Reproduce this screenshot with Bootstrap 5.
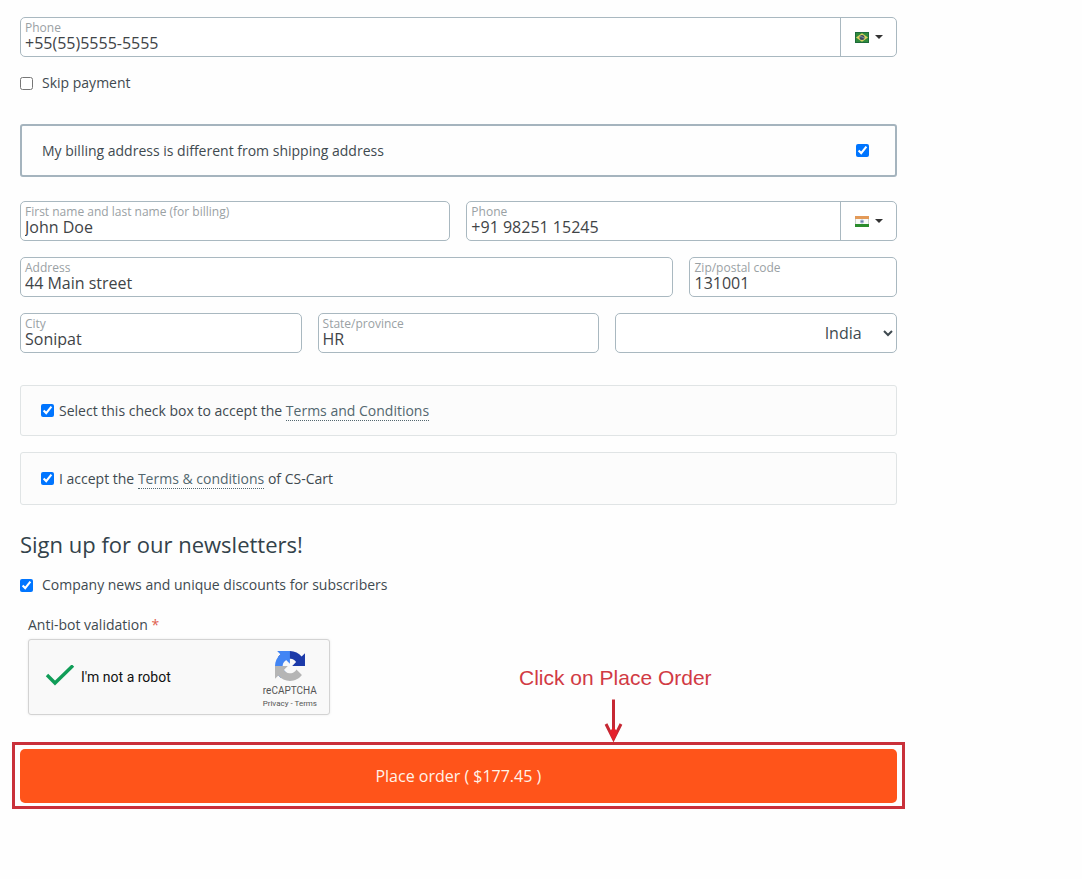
<!DOCTYPE html>
<html lang="en">
<head>
<meta charset="utf-8">
<meta name="viewport" content="width=device-width, initial-scale=1">
<title>Checkout</title>
<link href="https://cdn.jsdelivr.net/npm/bootstrap@5.3.0/dist/css/bootstrap.min.css" rel="stylesheet">
<style>
  body { font-family: "Open Sans", "Noto Sans", sans-serif; font-size: 14px; line-height: 20px; color: #3f4a50; background: #fefefe; }
  .checkout-pane { padding: 17px 5px 40px 20px; }
  input[type="checkbox"] { width: 13px; height: 13px; margin: 0; flex: none; }
  .check-line { gap: 9px; }

  /* Outlined text field with its caption above the value */
  .field-box { display: flex; height: 40px; border: 1px solid #a9b8c0; border-radius: 5px; background: #fff; }
  .field-main { display: flex; flex-direction: column; flex: 1 1 auto; min-width: 0; padding: 4px 4px 0; }
  .field-main label { font-size: 12px; line-height: 12px; color: #9aa1a4; }
  .field-main input { width: 100%; height: 18px; padding: 0; border: 0; outline: 0; background: none; color: #3f4447; font-size: 16px; line-height: 18px; }
  .flag-btn { flex: none; width: 56px; padding: 0 0 0 1px; border: 0; border-left: 1px solid #a9b8c0; background: none; color: #333; gap: 6px; }
  .caret-down { border: 4px solid transparent; border-top-color: #333; border-bottom: 0; }
  .country-select { width: 100%; height: 40px; padding: 0 18px 0 4px; border: 1px solid #a9b8c0; border-radius: 5px; background: #fff; color: #3f4a50; font-size: 16px; text-align: right; text-align-last: right; }

  .skip-row { margin-top: 16px; }
  .billing-toggle { margin: 31px 0 24px; padding: 0 26px 0 20px; height: 53px; border: 2px solid #a5b4be; border-radius: 3px; }
  .terms-list { margin-top: 32px; }
  .terms-box { min-height: 51px; padding: 0 20px; gap: 5px; border: 1px solid #e0e4e5; border-radius: 3px; background: #fcfcfc; }
  .terms-tall { min-height: 53px; }
  .terms-box a { color: #53676f; text-decoration: none; border-bottom: 1px dotted #53676f; }
  .news-title { margin: 24px 0 0; font-size: 22px; line-height: 30px; font-weight: 400; color: #33424a; }
  .news-row { margin-top: 16px; }

  .captcha-col { width: 310px; padding: 20px 0 27px 8px; }
  .captcha-col .required-star { color: #e0604f; }
  .captcha-box { width: 302px; height: 76px; margin-top: 4px; padding: 0 12px 0 16px; border: 1px solid #d3d3d3; border-radius: 3px; background: #f9f9f9; box-shadow: 0 0 3px rgba(0,0,0,.08); font-family: Roboto, sans-serif; color: #111; }
  .captcha-text { margin-left: 6px; }
  .captcha-brand { padding-top: 8px; font-size: 10px; line-height: 12px; color: #555; }
  .captcha-brand .legal { font-size: 8px; line-height: 14px; }
  .captcha-brand a { color: #555; text-decoration: none; }
  .callout { margin-left: 189px; font-family: "Liberation Sans", Arial, sans-serif; font-size: 21px; line-height: 24px; color: #d13a44; }
  .order-frame { margin: 0 -8px; padding: 4px 5px 3px; border: 3px solid #c9303a; }
  .order-btn { height: 54px; border: 0; border-radius: 5px; background: #ff541a; color: #fff3e8; font-size: 16px; font-weight: 500; }
</style>
</head>
<body>
<main class="row g-0">
  <form class="col-10 checkout-pane">
    <div class="field-box">
      <div class="field-main"><label for="phone">Phone</label><input id="phone" type="tel" value="+55(55)5555-5555"></div>
      <button type="button" class="flag-btn d-flex align-items-center justify-content-center" aria-label="Country code: Brazil">
        <svg width="14" height="11" viewBox="0 0 14 11" aria-hidden="true"><rect width="14" height="11" fill="#2f8a3c"/><rect x=".5" y=".5" width="13" height="10" fill="none" stroke="#1d6a3b"/><path d="M7 1.200 13 5.500 7 9.800 1 5.500z" fill="#d9d262"/><circle cx="7" cy="5.500" r="2.500" fill="#3c4a60"/><path d="M4.800 4.700Q7 4.200 9.200 6.200" stroke="#b9c4c6" stroke-width=".6" fill="none"/></svg>
        <span class="caret-down"></span>
      </button>
    </div>

    <div class="skip-row check-line d-flex align-items-center">
      <input type="checkbox" id="skip"><label for="skip">Skip payment</label>
    </div>

    <div class="billing-toggle d-flex align-items-center justify-content-between">
      <label for="billing">My billing address is different from shipping address</label>
      <input type="checkbox" id="billing" checked>
    </div>

    <div class="row g-3">
      <div class="col-6"><div class="field-box"><div class="field-main"><label for="fullname">First name and last name (for billing)</label><input id="fullname" type="text" value="John Doe"></div></div></div>
      <div class="col-6"><div class="field-box">
        <div class="field-main"><label for="bphone">Phone</label><input id="bphone" type="tel" value="+91 98251 15245"></div>
        <button type="button" class="flag-btn d-flex align-items-center justify-content-center" aria-label="Country code: India">
          <svg width="14" height="11" viewBox="0 0 14 11" aria-hidden="true"><rect width="14" height="11" fill="#c9d0cb"/><rect x="1" y="3" width="12" height="5" fill="#f8faf8"/><rect width="14" height="3" fill="#e39a58"/><rect y="8" width="14" height="3" fill="#2a8c2c"/><circle cx="7" cy="5.500" r="2" fill="#9fb0cc"/><circle cx="7" cy="5.500" r=".8" fill="#5a6d9c"/></svg>
          <span class="caret-down"></span>
        </button>
      </div></div>
      <div class="col-9"><div class="field-box"><div class="field-main"><label for="address">Address</label><input id="address" type="text" value="44 Main street"></div></div></div>
      <div class="col-3"><div class="field-box"><div class="field-main"><label for="zip">Zip/postal code</label><input id="zip" type="text" value="131001"></div></div></div>
      <div class="col-4"><div class="field-box"><div class="field-main"><label for="city">City</label><input id="city" type="text" value="Sonipat"></div></div></div>
      <div class="col-4"><div class="field-box"><div class="field-main"><label for="state">State/province</label><input id="state" type="text" value="HR"></div></div></div>
      <div class="col-4"><select class="country-select" aria-label="Country"><option selected>India</option></select></div>
    </div>

    <div class="terms-list d-flex flex-column gap-3">
      <div class="terms-box d-flex align-items-center">
        <input type="checkbox" id="terms1" checked>
        <label for="terms1">Select this check box to accept the <a href="#">Terms and Conditions</a></label>
      </div>
      <div class="terms-box terms-tall d-flex align-items-center">
        <input type="checkbox" id="terms2" checked>
        <label for="terms2">I accept the <a href="#">Terms &amp; conditions</a> of CS-Cart</label>
      </div>
    </div>

    <h2 class="news-title">Sign up for our newsletters!</h2>
    <div class="news-row check-line d-flex align-items-center">
      <input type="checkbox" id="news" checked><label for="news">Company news and unique discounts for subscribers</label>
    </div>

    <div class="d-flex align-items-end">
      <div class="captcha-col flex-shrink-0">
        <div>Anti-bot validation <span class="required-star">*</span></div>
        <div class="captcha-box d-flex align-items-center">
          <svg width="30" height="24" viewBox="0 0 30 24" fill="none" stroke="#109d58" stroke-width="3.4" aria-hidden="true"><path d="M2 10 10 18 28 0.500"/></svg>
          <span class="captcha-text me-auto">I'm not a robot</span>
          <div class="captcha-brand text-center">
            <svg class="d-block mx-auto mb-1" width="30" height="30" viewBox="0 0 64 64" aria-hidden="true">
              <path fill="#1c3aa9" d="M64 31.955l-.033-1.37V4.687l-7.16 7.16C50.948 4.674 42.033.093 32.05.093c-10.4 0-19.622 4.96-25.458 12.64l11.736 11.86a15.55 15.55 0 0 1 4.754-5.334c2.05-1.6 4.952-2.906 8.968-2.906.485 0 .86.057 1.135.163 4.976.393 9.288 3.14 11.828 7.124l-8.307 8.307L64 31.953"/>
              <path fill="#4285f4" d="M31.862.094l-1.37.033H4.594l7.16 7.16C4.58 13.147 0 22.06 0 32.046c0 10.4 4.96 19.622 12.64 25.458L24.5 45.768a15.55 15.55 0 0 1-5.334-4.754c-1.6-2.05-2.906-4.952-2.906-8.968 0-.485.057-.86.163-1.135.393-4.976 3.14-9.288 7.124-11.828l8.307 8.307L31.86.095"/>
              <path fill="#b5b5b5" d="M.001 32.045l.033 1.37v25.898l7.16-7.16c5.86 7.173 14.774 11.754 24.76 11.754 10.4 0 19.622-4.96 25.458-12.64l-11.736-11.86a15.55 15.55 0 0 1-4.754 5.334c-2.05 1.6-4.952 2.906-8.968 2.906-.485 0-.86-.057-1.135-.163-4.976-.393-9.288-3.14-11.828-7.124l8.307-8.307c-10.522.04-22.4.066-27.295-.005"/>
            </svg>
            <div>reCAPTCHA</div>
            <div class="legal"><a href="#">Privacy</a> - <a href="#">Terms</a></div>
          </div>
        </div>
      </div>
      <div class="callout text-nowrap text-center">
        Click on Place Order
        <svg class="d-block mx-auto" width="22" height="52" viewBox="0 0 22 52" fill="none" aria-hidden="true"><path d="M9.500 9.500V46" stroke="#c62833" stroke-width="3"/><path d="M2 34 9.500 49 17 34" stroke="#c62833" stroke-width="3"/><path d="M5.500 42 9.500 37 13.500 42 9.500 51z" fill="#e5202b"/></svg>
      </div>
    </div>

    <div class="order-frame">
      <button type="button" class="order-btn w-100 d-block">Place order ( $177.45 )</button>
    </div>
  </form>
</main>
<script src="https://cdn.jsdelivr.net/npm/bootstrap@5.3.0/dist/js/bootstrap.bundle.min.js"></script>
</body>
</html>
